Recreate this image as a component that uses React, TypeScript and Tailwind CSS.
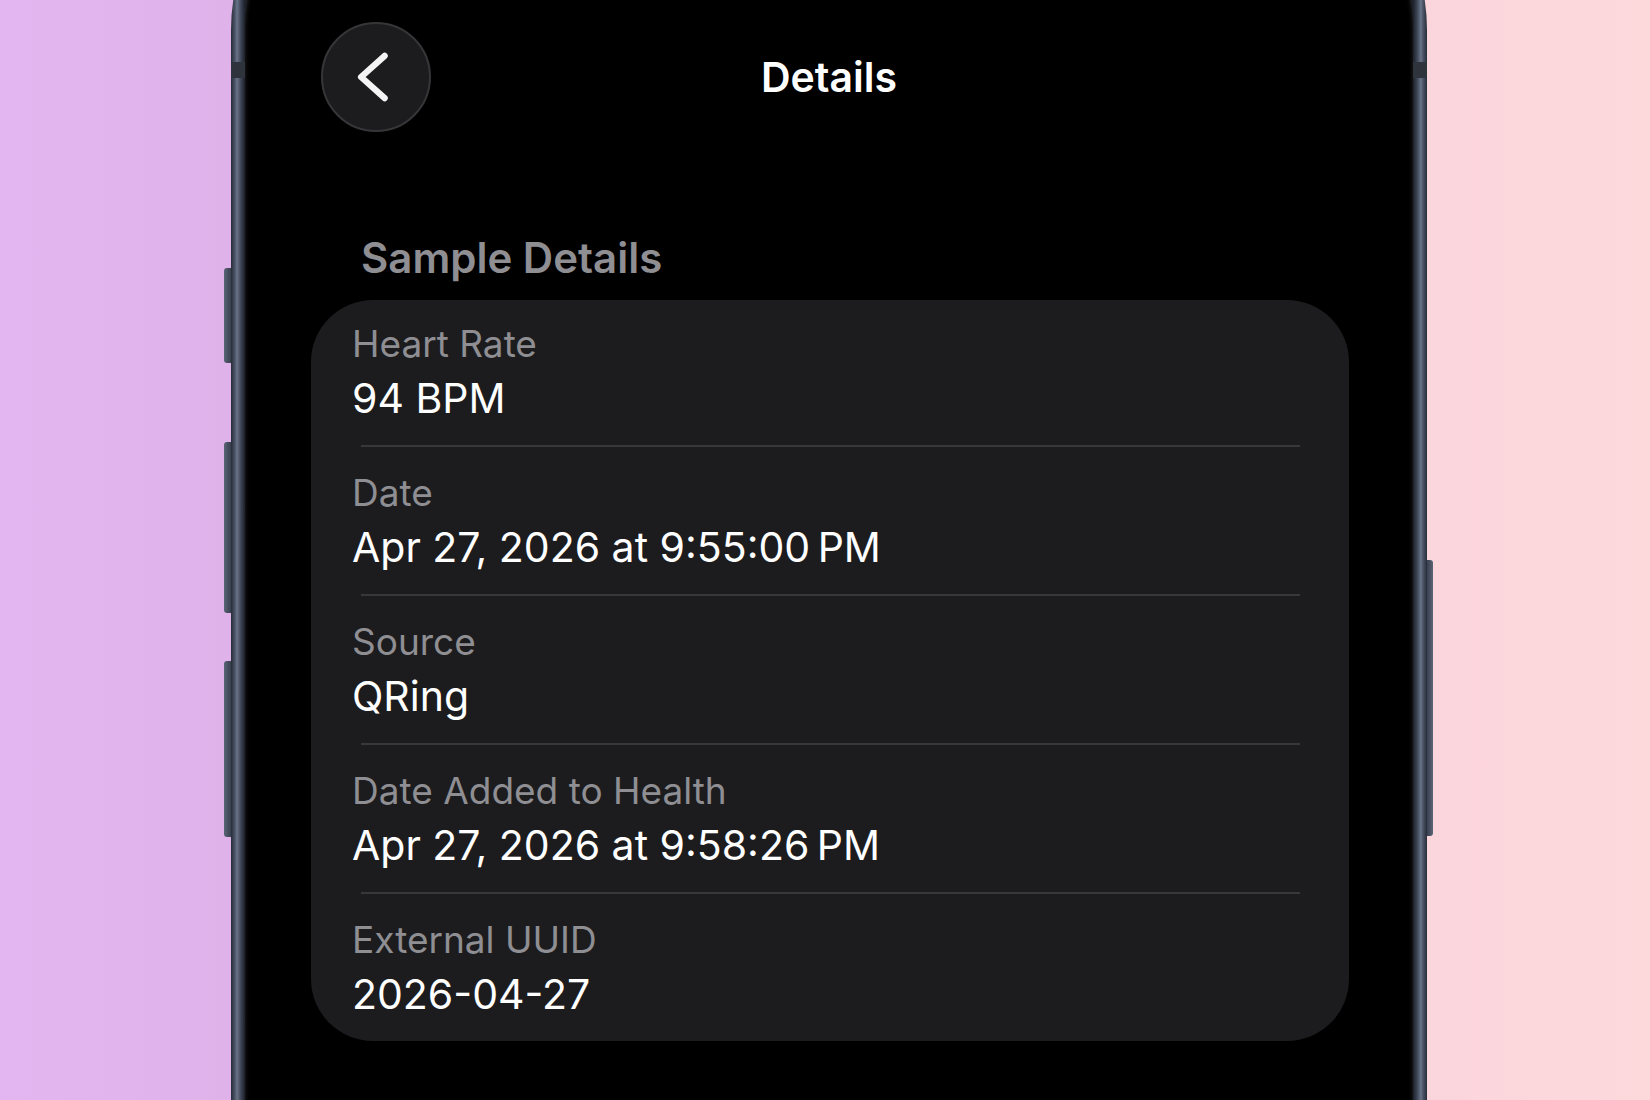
const rows = [
  { label: 'Heart Rate', value: '94 BPM' },
  { label: 'Date', value: 'Apr 27, 2026 at 9:55:00\u202FPM' },
  { label: 'Source', value: 'QRing' },
  { label: 'Date Added to Health', value: 'Apr 27, 2026 at 9:58:26\u202FPM' },
  { label: 'External UUID', value: '2026-04-27' },
]

function ChevronLeft() {
  return (
    <svg width="110" height="110" viewBox="0 0 110 110" fill="none">
      <path d="M64 33 L39.5 55 L64 77" stroke="#f4f4f4" strokeWidth="6.5" strokeLinecap="round" strokeLinejoin="round" />
    </svg>
  )
}

export default function App() {
  return (
    <div className="relative h-[1100px] w-[1650px] overflow-hidden bg-[linear-gradient(90deg,#e3b6f1_0%,#e0b2ea_14%,#fbd5dc_86%,#fdd9dc_100%)] [font-family:Inter,'Noto_Sans',sans-serif]">
      {/* Phone */}
      <div className="relative ml-[231px] mt-[-170px] h-[1500px] w-[1196px] rounded-[200px] bg-[linear-gradient(90deg,#262c38_0px,#4c5568_4px,#6a7488_6px,#3c4454_10px,#1c2029_14px,#1c2029_calc(100%-14px),#3c4454_calc(100%-10px),#6a7488_calc(100%-6px),#4c5568_calc(100%-4px),#262c38_100%)] p-[14px]">
        {/* antenna bands */}
        <div className="absolute left-0 top-[232px] h-[16px] w-[14px] bg-[#2f333c]" />
        <div className="absolute right-0 top-[232px] h-[16px] w-[14px] bg-[#2f333c]" />

        {/* side buttons */}
        <div className="absolute left-[-7px] top-[438px] h-[95px] w-[7px] rounded-l-[3px] bg-[linear-gradient(90deg,#5a6476,#39404e)]" />
        <div className="absolute left-[-7px] top-[612px] h-[171px] w-[7px] rounded-l-[3px] bg-[linear-gradient(90deg,#5a6476,#39404e)]" />
        <div className="absolute left-[-7px] top-[831px] h-[176px] w-[7px] rounded-l-[3px] bg-[linear-gradient(90deg,#5a6476,#39404e)]" />
        <div className="absolute right-[-6px] top-[730px] h-[276px] w-[6px] rounded-r-[3px] bg-[linear-gradient(90deg,#39404e,#5a6476)]" />

        {/* Screen */}
        <div className="h-full rounded-[186px] bg-black pt-[178px] shadow-[inset_0_0_4px_#2a2a2a]">
          {/* Header */}
          <div className="grid grid-cols-[110px_1fr_110px] items-center px-[76px]">
            <div className="flex h-[110px] w-[110px] items-center justify-center rounded-full border-2 border-[#363638] bg-[#1c1c1e]">
              <ChevronLeft />
            </div>
            <h1 className="text-center text-[41px] font-semibold leading-[50px] text-white">Details</h1>
            <div />
          </div>

          <h2 className="ml-[116px] mt-[101px] text-[42px] font-semibold leading-[50px] text-[#8e8e93]">Sample Details</h2>

          <div className="ml-[66px] mt-[17px] w-[1038px] rounded-[62px] bg-[#1c1c1e]">
            {rows.map((row, i) => (
              <div key={row.label}>
                {i > 0 && <div className="ml-[50px] mr-[49px] h-[2px] bg-[#38383a]" />}
                <div className={i === 0 ? 'px-[41px] pb-[22px] pt-[22px]' : 'px-[41px] pb-[22px] pt-[24px]'}>
                  <p className="text-[37px] leading-[44px] text-[#8e8e93]">{row.label}</p>
                  <p className="mt-[7px] text-[41px] leading-[50px] text-white">{row.value}</p>
                </div>
              </div>
            ))}
          </div>
        </div>
      </div>
    </div>
  )
}
